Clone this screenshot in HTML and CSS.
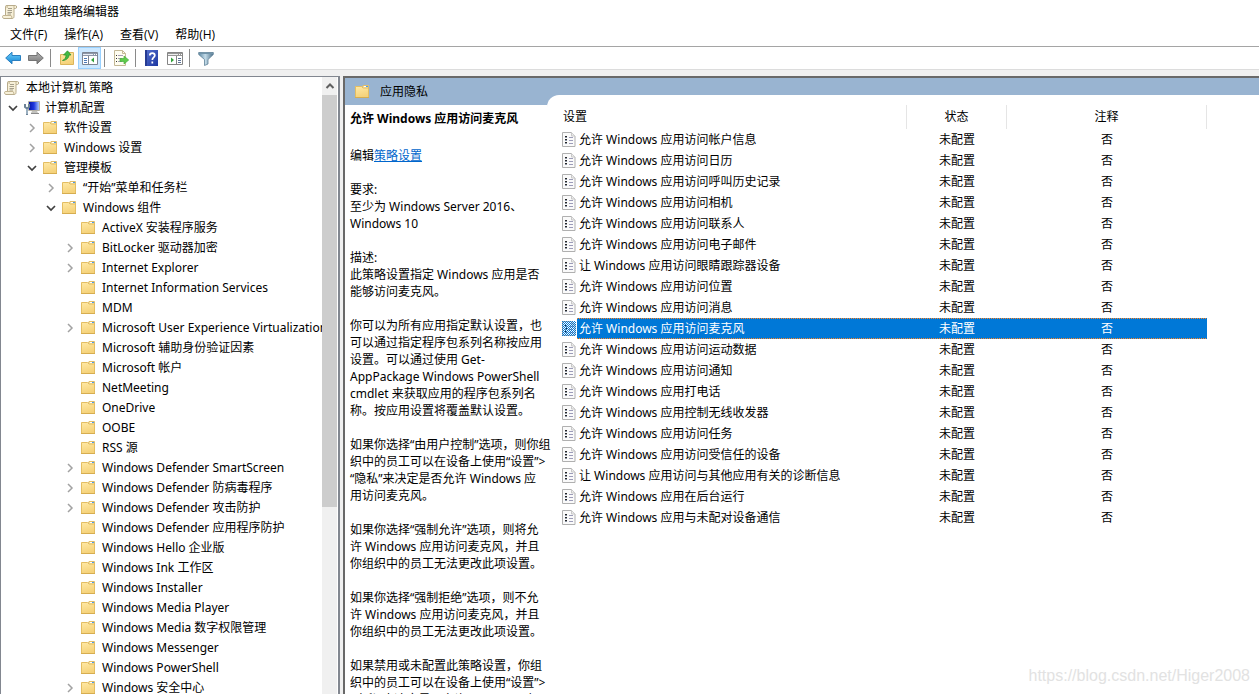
FILE: index.html
```html
<!DOCTYPE html>
<html lang="zh-CN">
<head>
<meta charset="utf-8">
<title>本地组策略编辑器</title>
<link rel="stylesheet" href="styles.css">
</head>
<body>
<svg class="sprites" aria-hidden="true">
  <defs>
    <linearGradient id="g-folder" x1="0" y1="0" x2="0.3" y2="1"><stop offset="0" stop-color="#ffe9a6"/><stop offset="1" stop-color="#f5d27a"/></linearGradient>
    <linearGradient id="g-blue" x1="0" y1="0" x2="0" y2="1"><stop offset="0" stop-color="#6fd0fb"/><stop offset="1" stop-color="#1283d3"/></linearGradient>
    <linearGradient id="g-gray" x1="0" y1="0" x2="0" y2="1"><stop offset="0" stop-color="#b5b5b5"/><stop offset="1" stop-color="#777777"/></linearGradient>
    <linearGradient id="g-help" x1="0" y1="0" x2="1" y2="1"><stop offset="0" stop-color="#5570cf"/><stop offset="1" stop-color="#1c36a0"/></linearGradient>
    <linearGradient id="g-funnel" x1="0" y1="0" x2="1" y2="0"><stop offset="0" stop-color="#5c87a3"/><stop offset=".45" stop-color="#c3dbe8"/><stop offset="1" stop-color="#4b6f89"/></linearGradient>
    <linearGradient id="g-screen" x1="0" y1="0" x2="1" y2="0"><stop offset="0" stop-color="#0718a8"/><stop offset=".5" stop-color="#2038e0"/><stop offset="1" stop-color="#a9c6fa"/></linearGradient>
    <pattern id="p-dither" width="2" height="2" patternUnits="userSpaceOnUse"><path fill="#0078d7" d="M0 0h1v1H0zM1 1h1v1H1z"/></pattern>
  </defs>
  <symbol id="folder" viewBox="0 0 16 16">
    <path d="M8 4.500l1-3h5.500v3z" fill="#f6e3a8" stroke="#e0bd6a"/>
    <path d="M10 2h4v1h-4z" fill="#fff"/><path d="M12 2h2v1h-2z" fill="#4b9be8"/>
    <path d="M1.500 2.500h6l1.500 1.500h5.500v9.500h-13z" fill="url(#g-folder)" stroke="#e3bd62"/>
    <path d="M1 13.500h14" stroke="#d6ad50"/>
  </symbol>
  <symbol id="scroll" viewBox="0 0 16 16">
    <path d="M4 1.500h9.500c1.500 0 1.500 3 0 3H12v8c0 1.500-1 2-2 2H2c-1.700 0-2-3-.5-3h2V3z" fill="#f7f0d8" stroke="#b8ac8c"/>
    <path d="M4 1.500c1.300 0 1.500 1 1 2.500M1.500 11.500H9c1 0 .5 3 1.500 3M12 4.500V2" fill="none" stroke="#c4b693"/>
    <path d="M6 4.500h4M5.500 6.500H10M5.500 8.500H10M5.500 10H9" stroke="#908a79" stroke-width=".8"/>
  </symbol>
  <symbol id="computer" viewBox="0 0 16 16">
    <path d="M4.500 1.500h11v9h-11z" fill="#ddd9cd" stroke="#b5b1a4"/>
    <path d="M5 2h10v8H5z" fill="url(#g-screen)"/>
    <path d="M8 11h5l1 2H7z" fill="#c3c3bf"/><path d="M7 13.500h8" stroke="#8b8b8b"/>
    <path d="M1 4v3l2 1.500L5 7V4M3 8v7" fill="none" stroke="#6c8296" stroke-width="2"/>
    <path d="M3 9v5" stroke="#c8dce9"/>
  </symbol>
  <symbol id="setting" viewBox="0 0 14 15">
    <path d="M.5.500h9l3.500 3.500v10.500H.5z" fill="#fafafa" stroke="#b0b0b0"/>
    <path d="M9.500.500v3.500h3.500" fill="#ececec" stroke="#c8c8c8"/>
    <path d="M3 4h2v1H3zM3 7h2v1H3zM3 10h2v1H3z" fill="#262626"/>
    <path d="M3 5h2v1H3zM3 8h2v1H3zM3 11h2v1H3z" fill="#8a94a4"/>
    <path d="M7 5.500h4M7 8.500h4M7 11.500h4" stroke="#9c9cb8"/>
  </symbol>
  <symbol id="right" viewBox="0 0 10 10"><path d="M3 1l4 4-4 4" fill="none" stroke="#a2a2a2" stroke-width="1.500"/></symbol>
  <symbol id="down" viewBox="0 0 10 10"><path d="M1 3l4 4 4-4" fill="none" stroke="#404040" stroke-width="1.700"/></symbol>
</svg>

<header class="titlebar">
  <svg class="icon"><use href="#scroll"/></svg>
  <h1 class="title">本地组策略编辑器</h1>
</header>
<nav class="menubar">
  <button class="menu">文件(F)</button>
  <button class="menu">操作(A)</button>
  <button class="menu">查看(V)</button>
  <button class="menu">帮助(H)</button>
</nav>
<div class="toolbar" role="toolbar">
  <button class="tool" aria-label="后退"><svg class="icon" viewBox="0 0 16 16"><path d="M.7 8L7 2.200v3.300h8.500v5H7v3.300z" fill="url(#g-blue)" stroke="#2a7fc0"/></svg></button>
  <button class="tool" aria-label="前进"><svg class="icon" viewBox="0 0 16 16"><path d="M15.300 8L9 2.200v3.300H.5v5H9v3.300z" fill="url(#g-gray)" stroke="#747474"/></svg></button>
  <span class="divider"></span>
  <button class="tool" aria-label="向上一级"><svg class="icon" viewBox="0 0 16 16"><path d="M1.500 4.500h7l1-2h5v12h-13z" fill="url(#g-folder)" stroke="#dcb55a"/><path d="M3.500 10.500c2.500-1 3.500-3 3.500-5.500H4.500L8.500.8 12 5h-2c0 3-3 5.500-6.500 5.500z" fill="#42b943" stroke="#258f28" stroke-width=".7"/></svg></button>
  <button class="tool active" aria-label="显示/隐藏控制台树"><svg class="icon" viewBox="0 0 16 16"><path d="M.5 2.500h15v12H.5z" fill="#fff" stroke="#7d8592"/><path d="M1 3h14v3H1z" fill="#8e98a9"/><path d="M1 4.500h10" stroke="#e9edf3"/><path d="M12 4.500h1M14 4.500h1" stroke="#fff"/><path d="M6.500 6v8" stroke="#7d8592"/><path d="M2 8.500h3M2 10.500h3M2 12.500h3" stroke="#4c79b6"/><path d="M12 7.500v5L9 10z" fill="#32a13a"/></svg></button>
  <span class="divider"></span>
  <button class="tool" aria-label="导出列表"><svg class="icon" viewBox="0 0 16 16"><path d="M1.500.5h8l3 3v12h-11z" fill="#fffdf0" stroke="#c4b896"/><path d="M9.500.5v3h3" fill="none" stroke="#c4b896"/><path d="M3 5.500h1M3 8.500h1M3 11.500h1" stroke="#333"/><path d="M5 5.500h5M5 8.500h4M5 11.500h4" stroke="#a99fb8"/><path d="M7 8.500h4V6l4.700 4-4.700 4v-2.500H7z" fill="#5fcb4c" stroke="#48ad3e" stroke-width=".7"/></svg></button>
  <span class="divider"></span>
  <button class="tool" aria-label="帮助"><svg class="icon" viewBox="0 0 16 16"><path d="M1 0h13v16H1z" fill="url(#g-help)"/><path d="M1 0h2v16H1z" fill="#263b92"/><path d="M5.800 5.500c0-3.300 5-3.300 5 0 0 2-2.500 2-2.500 4.500M8.300 11.500v2" fill="none" stroke="#fff" stroke-width="1.700"/></svg></button>
  <button class="tool" aria-label="显示/隐藏操作窗格"><svg class="icon" viewBox="0 0 16 16"><path d="M.5 2.500h15v12H.5z" fill="#fff" stroke="#858585"/><path d="M1 3h14v3H1z" fill="#969696"/><path d="M1 4.500h10" stroke="#eee"/><path d="M12 4.500h1M14 4.500h1" stroke="#fff"/><path d="M9.500 6v8" stroke="#858585"/><path d="M11 8.500h3M11 10.500h3M11 12.500h3" stroke="#5c7397"/><path d="M4 7.500v5L7 10z" fill="#32a13a"/></svg></button>
  <span class="divider"></span>
  <button class="tool" aria-label="筛选器"><svg class="icon" viewBox="0 0 16 16"><path d="M.7 2.500h14.600v2L10 9.500v4.500l-3.500 1.500v-6L.7 4.500z" fill="url(#g-funnel)" stroke="#5f8198" stroke-width=".8"/><path d="M1 3.500h14" stroke="#7194aa"/></svg></button>
</div>

<main class="workspace">
  <section class="tree-pane">
    <ul class="tree">
      <li><div class="node"><svg class="icon"><use href="#scroll"/></svg>本地计算机 策略</div></li>
      <li><div class="node"><button class="twisty" aria-label="折叠"><svg><use href="#down"/></svg></button><svg class="icon computer"><use href="#computer"/></svg>计算机配置</div>
        <ul>
          <li><div class="node"><button class="twisty" aria-label="展开"><svg><use href="#right"/></svg></button><svg class="icon"><use href="#folder"/></svg>软件设置</div></li>
          <li><div class="node"><button class="twisty" aria-label="展开"><svg><use href="#right"/></svg></button><svg class="icon"><use href="#folder"/></svg>Windows 设置</div></li>
          <li><div class="node"><button class="twisty" aria-label="折叠"><svg><use href="#down"/></svg></button><svg class="icon"><use href="#folder"/></svg>管理模板</div>
            <ul>
              <li><div class="node"><button class="twisty" aria-label="展开"><svg><use href="#right"/></svg></button><svg class="icon"><use href="#folder"/></svg>“开始”菜单和任务栏</div></li>
              <li><div class="node"><button class="twisty" aria-label="折叠"><svg><use href="#down"/></svg></button><svg class="icon"><use href="#folder"/></svg>Windows 组件</div>
                <ul>
                  <li><div class="node leaf"><svg class="icon"><use href="#folder"/></svg>ActiveX 安装程序服务</div></li>
                  <li><div class="node"><button class="twisty" aria-label="展开"><svg><use href="#right"/></svg></button><svg class="icon"><use href="#folder"/></svg>BitLocker 驱动器加密</div></li>
                  <li><div class="node"><button class="twisty" aria-label="展开"><svg><use href="#right"/></svg></button><svg class="icon"><use href="#folder"/></svg>Internet Explorer</div></li>
                  <li><div class="node leaf"><svg class="icon"><use href="#folder"/></svg>Internet Information Services</div></li>
                  <li><div class="node leaf"><svg class="icon"><use href="#folder"/></svg>MDM</div></li>
                  <li><div class="node"><button class="twisty" aria-label="展开"><svg><use href="#right"/></svg></button><svg class="icon"><use href="#folder"/></svg>Microsoft User Experience Virtualization</div></li>
                  <li><div class="node leaf"><svg class="icon"><use href="#folder"/></svg>Microsoft 辅助身份验证因素</div></li>
                  <li><div class="node leaf"><svg class="icon"><use href="#folder"/></svg>Microsoft 帐户</div></li>
                  <li><div class="node leaf"><svg class="icon"><use href="#folder"/></svg>NetMeeting</div></li>
                  <li><div class="node leaf"><svg class="icon"><use href="#folder"/></svg>OneDrive</div></li>
                  <li><div class="node leaf"><svg class="icon"><use href="#folder"/></svg>OOBE</div></li>
                  <li><div class="node leaf"><svg class="icon"><use href="#folder"/></svg>RSS 源</div></li>
                  <li><div class="node"><button class="twisty" aria-label="展开"><svg><use href="#right"/></svg></button><svg class="icon"><use href="#folder"/></svg>Windows Defender SmartScreen</div></li>
                  <li><div class="node"><button class="twisty" aria-label="展开"><svg><use href="#right"/></svg></button><svg class="icon"><use href="#folder"/></svg>Windows Defender 防病毒程序</div></li>
                  <li><div class="node"><button class="twisty" aria-label="展开"><svg><use href="#right"/></svg></button><svg class="icon"><use href="#folder"/></svg>Windows Defender 攻击防护</div></li>
                  <li><div class="node leaf"><svg class="icon"><use href="#folder"/></svg>Windows Defender 应用程序防护</div></li>
                  <li><div class="node leaf"><svg class="icon"><use href="#folder"/></svg>Windows Hello 企业版</div></li>
                  <li><div class="node leaf"><svg class="icon"><use href="#folder"/></svg>Windows Ink 工作区</div></li>
                  <li><div class="node leaf"><svg class="icon"><use href="#folder"/></svg>Windows Installer</div></li>
                  <li><div class="node leaf"><svg class="icon"><use href="#folder"/></svg>Windows Media Player</div></li>
                  <li><div class="node leaf"><svg class="icon"><use href="#folder"/></svg>Windows Media 数字权限管理</div></li>
                  <li><div class="node leaf"><svg class="icon"><use href="#folder"/></svg>Windows Messenger</div></li>
                  <li><div class="node leaf"><svg class="icon"><use href="#folder"/></svg>Windows PowerShell</div></li>
                  <li><div class="node"><button class="twisty" aria-label="展开"><svg><use href="#right"/></svg></button><svg class="icon"><use href="#folder"/></svg>Windows 安全中心</div></li>
                </ul>
              </li>
            </ul>
          </li>
        </ul>
      </li>
    </ul>
    <div class="scrollbar">
      <button class="scroll-up" aria-label="向上滚动"><svg viewBox="0 0 10 10"><path d="M1.500 7L5 3.500 8.500 7" fill="none" stroke="#606060" stroke-width="2"/></svg></button>
      <div class="thumb"></div>
    </div>
  </section>

  <section class="detail-pane">
    <div class="info">
      <h2 class="pane-title"><svg class="icon"><use href="#folder"/></svg>应用隐私</h2>
      <div class="description">
        <h3 class="policy">允许 Windows 应用访问麦克风</h3>
        <p class="edit">编辑<a href="#edit">策略设置</a></p>
        <p>要求:<br>至少为 Windows Server 2016、<br>Windows 10</p>
        <p>描述:<br>此策略设置指定 Windows 应用是否<br>能够访问麦克风。</p>
        <p>你可以为所有应用指定默认设置，也<br>可以通过指定程序包系列名称按应用<br>设置。可以通过使用 Get-<br>AppPackage Windows PowerShell<br>cmdlet 来获取应用的程序包系列名<br>称。按应用设置将覆盖默认设置。</p>
        <p>如果你选择“由用户控制”选项，则你组<br>织中的员工可以在设备上使用“设置”&gt;<br>“隐私”来决定是否允许 Windows 应<br>用访问麦克风。</p>
        <p>如果你选择“强制允许”选项，则将允<br>许 Windows 应用访问麦克风，并且<br>你组织中的员工无法更改此项设置。</p>
        <p>如果你选择“强制拒绝”选项，则不允<br>许 Windows 应用访问麦克风，并且<br>你组织中的员工无法更改此项设置。</p>
        <p>如果禁用或未配置此策略设置，你组<br>织中的员工可以在设备上使用“设置”&gt;<br>“隐私”来决定是否允许 Windows 应<br>用访问麦克风。</p>
      </div>
    </div>
    <div class="list">
      <table class="settings">
        <colgroup><col class="c-name"><col class="c-state"><col class="c-note"></colgroup>
        <thead><tr><th>设置</th><th>状态</th><th>注释</th></tr></thead>
        <tbody>
          <tr><td><div class="item"><svg><use href="#setting"/></svg><span>允许 Windows 应用访问帐户信息</span></div></td><td>未配置</td><td>否</td></tr>
          <tr><td><div class="item"><svg><use href="#setting"/></svg><span>允许 Windows 应用访问日历</span></div></td><td>未配置</td><td>否</td></tr>
          <tr><td><div class="item"><svg><use href="#setting"/></svg><span>允许 Windows 应用访问呼叫历史记录</span></div></td><td>未配置</td><td>否</td></tr>
          <tr><td><div class="item"><svg><use href="#setting"/></svg><span>允许 Windows 应用访问相机</span></div></td><td>未配置</td><td>否</td></tr>
          <tr><td><div class="item"><svg><use href="#setting"/></svg><span>允许 Windows 应用访问联系人</span></div></td><td>未配置</td><td>否</td></tr>
          <tr><td><div class="item"><svg><use href="#setting"/></svg><span>允许 Windows 应用访问电子邮件</span></div></td><td>未配置</td><td>否</td></tr>
          <tr><td><div class="item"><svg><use href="#setting"/></svg><span>让 Windows 应用访问眼睛跟踪器设备</span></div></td><td>未配置</td><td>否</td></tr>
          <tr><td><div class="item"><svg><use href="#setting"/></svg><span>允许 Windows 应用访问位置</span></div></td><td>未配置</td><td>否</td></tr>
          <tr><td><div class="item"><svg><use href="#setting"/></svg><span>允许 Windows 应用访问消息</span></div></td><td>未配置</td><td>否</td></tr>
          <tr class="selected"><td><div class="item"><svg viewBox="0 0 14 15"><use href="#setting" width="14" height="15"/><path d="M0 0h14v15H0z" fill="url(#p-dither)" shape-rendering="crispEdges"/></svg><span>允许 Windows 应用访问麦克风</span></div></td><td>未配置</td><td>否</td></tr>
          <tr><td><div class="item"><svg><use href="#setting"/></svg><span>允许 Windows 应用访问运动数据</span></div></td><td>未配置</td><td>否</td></tr>
          <tr><td><div class="item"><svg><use href="#setting"/></svg><span>允许 Windows 应用访问通知</span></div></td><td>未配置</td><td>否</td></tr>
          <tr><td><div class="item"><svg><use href="#setting"/></svg><span>允许 Windows 应用打电话</span></div></td><td>未配置</td><td>否</td></tr>
          <tr><td><div class="item"><svg><use href="#setting"/></svg><span>允许 Windows 应用控制无线收发器</span></div></td><td>未配置</td><td>否</td></tr>
          <tr><td><div class="item"><svg><use href="#setting"/></svg><span>允许 Windows 应用访问任务</span></div></td><td>未配置</td><td>否</td></tr>
          <tr><td><div class="item"><svg><use href="#setting"/></svg><span>允许 Windows 应用访问受信任的设备</span></div></td><td>未配置</td><td>否</td></tr>
          <tr><td><div class="item"><svg><use href="#setting"/></svg><span>让 Windows 应用访问与其他应用有关的诊断信息</span></div></td><td>未配置</td><td>否</td></tr>
          <tr><td><div class="item"><svg><use href="#setting"/></svg><span>允许 Windows 应用在后台运行</span></div></td><td>未配置</td><td>否</td></tr>
          <tr><td><div class="item"><svg><use href="#setting"/></svg><span>允许 Windows 应用与未配对设备通信</span></div></td><td>未配置</td><td>否</td></tr>
        </tbody>
      </table>
    </div>
  </section>
</main>
<div class="watermark">https://blog.csdn.net/Higer2008</div>
</body>
</html>
```
FILE: styles.css
```css
* { box-sizing: border-box; }
html, body { height: 100%; }
body {
  margin: 0;
  display: flex;
  flex-direction: column;
  overflow: hidden;
  background: #fff;
  color: #000;
  font: 12px/20px "Noto Sans", "Noto Sans CJK SC", sans-serif;
}
h1, h2, h3, p, ul { margin: 0; padding: 0; font-size: 12px; font-weight: normal; }
ul { list-style: none; }
button { padding: 0; border: 0; background: none; color: inherit; font: inherit; }
svg { display: block; flex: none; }
.sprites { position: absolute; width: 0; height: 0; }
.icon { width: 16px; height: 16px; }

.titlebar { display: flex; align-items: center; gap: 5px; height: 24px; padding-left: 2px; flex: none; }
.menubar {
  display: flex;
  gap: 17px;
  height: 23px;
  padding-left: 10px;
  flex: none;
  border-bottom: 1px solid #a5a5a5;
  font-family: "Open Sans", "Noto Sans CJK SC", sans-serif;
}
.toolbar {
  display: flex;
  align-items: center;
  height: 23px;
  padding-left: 1px;
  flex: none;
  border-bottom: 1px solid #dcdcdc;
}
.tool { display: grid; place-items: center; width: 23px; height: 22px; }
.tool.active { border: 1px solid #99d1ff; background: #cce8ff; }
.divider { width: 1px; height: 18px; margin: 0 4px 0 3px; background: #8a8a8a; }

.workspace {
  display: flex;
  gap: 3px;
  flex: 1;
  min-height: 0;
  padding-top: 6px;
  background: #f0f0f0;
}
.tree-pane {
  display: flex;
  flex: none;
  width: 340px;
  overflow: hidden;
  background: #fff;
  border: solid #828790;
  border-width: 1px 2px 0 1px;
}
.tree { flex: 1; min-width: 0; overflow: hidden; padding: 1px 0 0 2px; }
.tree ul ul, .tree > li > ul { padding-left: 19px; }
.node { display: flex; align-items: center; height: 20px; white-space: nowrap; }
.node .icon { margin: 0 6px 0 1px; }
.node .computer { margin: 0 5px 0 2px; }
.node.leaf { padding-left: 19px; }
.twisty { display: grid; place-items: center; width: 19px; height: 20px; flex: none; }
.twisty svg { width: 10px; height: 10px; }
.scrollbar { width: 16px; border-right: 1px solid #fff; background: #f0f0f0; flex: none; }
.scroll-up { display: grid; place-items: center; width: 15px; height: 18px; }
.scroll-up svg { width: 10px; height: 10px; }
.thumb { height: 412px; background: #cdcdcd; }

.detail-pane {
  display: flex;
  flex: 1;
  min-width: 0;
  overflow: hidden;
  background: #99b4d1;
  border: solid #696969;
  border-width: 2px 0 0 2px;
}
.info { position: relative; z-index: 1; display: flex; flex-direction: column; width: 202px; flex: none; }
.pane-title { display: flex; align-items: center; gap: 10px; height: 27px; padding-left: 9px; flex: none; }
.description { flex: 1; min-height: 0; padding: 5px 0 0 5px; background: #fff; line-height: 17px; white-space: nowrap; }
.description p { margin-bottom: 17px; }
.description .policy { font-weight: bold; margin-bottom: 20px; }
.description .edit { margin-bottom: 17px; }
.description a { color: #0066cc; }
.list { flex: 1; min-width: 0; margin-top: 17px; padding: 10px 0 0 10px; background: #fff; border-top-left-radius: 12px; }
.settings { width: 650px; table-layout: fixed; border-spacing: 0; }
.c-name { width: 350px; }
.c-state { width: 100px; }
.c-note { width: 200px; }
.settings th { height: 24px; padding: 0; border-right: 1px solid #e5e5e5; font-weight: normal; }
.settings th:first-child { padding-left: 6px; text-align: left; }
.settings td { height: 21px; padding: 0; text-align: center; }
.item { display: flex; align-items: center; gap: 1px; height: 21px; padding-left: 5px; text-align: left; }
.item svg { width: 14px; height: 15px; }
.item span { flex: 1; height: 21px; padding-left: 2px; line-height: 22px; }
.selected td { color: #fff; }
.selected span, .selected td + td {
  background:
    repeating-linear-gradient(90deg, #ff8728 0 1px, #0078d7 1px 2px) 0 0 / 100% 1px no-repeat,
    repeating-linear-gradient(90deg, #ff8728 0 1px, #0078d7 1px 2px) 0 100% / 100% 1px no-repeat,
    #0078d7;
}

.watermark {
  position: absolute;
  right: 9px;
  bottom: 8px;
  color: #e2e2e2;
  font: 16px/20px "Liberation Sans", sans-serif;
}
```
